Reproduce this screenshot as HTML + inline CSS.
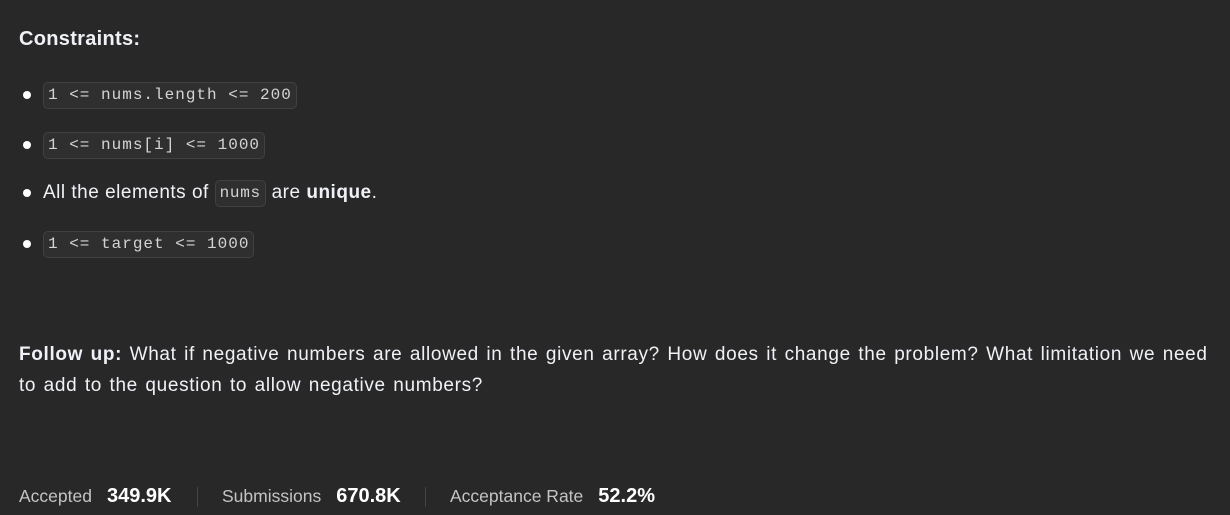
<!DOCTYPE html>
<html><head><style>
body{margin:0;background:#282828;width:1230px;height:515px;overflow:hidden;font-family:"Liberation Sans",sans-serif;color:#eff1f6;}
.t{position:absolute;left:19px;font-size:19px;letter-spacing:0.65px;word-spacing:1.6px;white-space:nowrap}
.code{display:inline-block;font-family:"Liberation Mono",monospace;font-size:16px;letter-spacing:1px;color:#d4d4d4;background:#2f2f2f;border:1px solid #414141;border-radius:5px;padding:3px 4px;line-height:19px;}
.li{position:absolute;left:19px;font-size:19px;letter-spacing:0.5px;word-spacing:0px;white-space:nowrap;height:28px;display:flex;align-items:center}
.dot{width:8px;height:8px;border-radius:50%;background:#fff;margin:0 12px 0 4px}
.s{position:absolute;top:485px;font-size:17.5px;color:#c4c4c4;white-space:nowrap}
.s b{color:#fff;font-size:20px;margin-left:15px}
.sep{position:absolute;top:487px;width:1px;height:20px;background:#444}
</style></head><body>
<div class="t" style="top:28px;font-weight:bold;font-size:20px;letter-spacing:0.3px;word-spacing:0">Constraints:</div>
<div class="li" style="top:81px"><span class="dot"></span><span class="code">1 &lt;= nums.length &lt;= 200</span></div>
<div class="li" style="top:131px"><span class="dot"></span><span class="code">1 &lt;= nums[i] &lt;= 1000</span></div>
<div class="li" style="top:179px"><span class="dot"></span>All the elements of&nbsp;<span class="code" style="font-size:16px;letter-spacing:0.7px;padding:3px 4px">nums</span>&nbsp;are&nbsp;<b>unique</b>.</div>
<div class="li" style="top:230px"><span class="dot"></span><span class="code">1 &lt;= target &lt;= 1000</span></div>
<div class="t" style="top:339px;line-height:31px"><b>Follow up:</b> What if negative numbers are allowed in the given array? How does it change the problem? What limitation we need<br>to add to the question to allow negative numbers?</div>
<div class="s" style="left:19px">Accepted<b>349.9K</b></div>
<div class="sep" style="left:197px"></div>
<div class="s" style="left:222px">Submissions<b>670.8K</b></div>
<div class="sep" style="left:425px"></div>
<div class="s" style="left:450px">Acceptance Rate<b>52.2%</b></div>
</body></html>
